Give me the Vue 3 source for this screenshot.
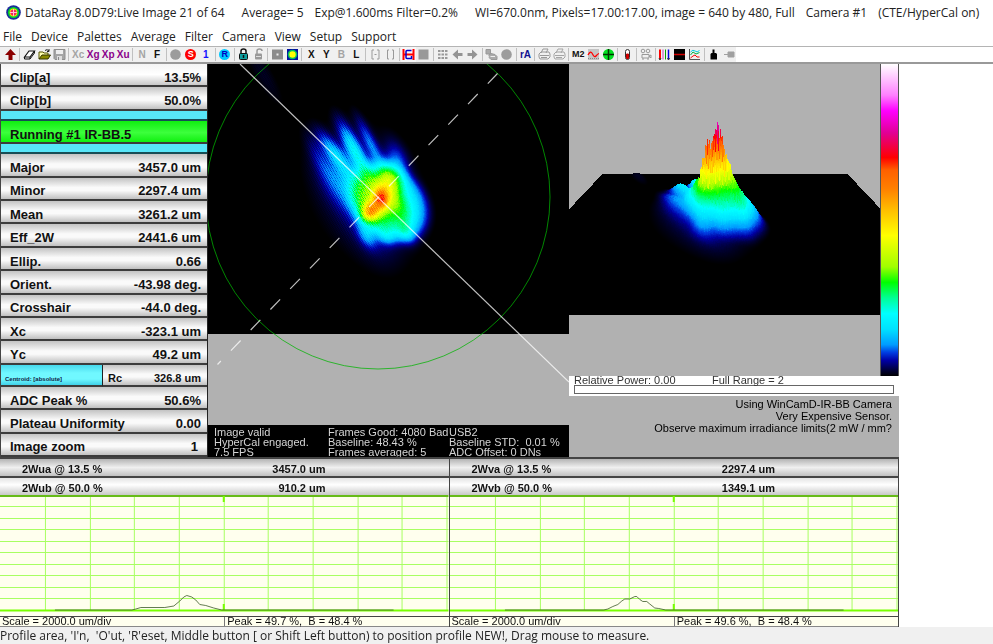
<script setup>
import { onMounted, ref } from 'vue'

const titleParts = [
  ['DataRay 8.0D79:Live Image 21 of 64', 'wide'],
  ['Average= 5', ''],
  ['Exp@1.600ms Filter=0.2%', 'wide'],
  ['WI=670.0nm, Pixels=17.00:17.00, image = 640 by 480, Full', ''],
  ['Camera #1', ''],
  ['(CTE/HyperCal on)', ''],
]

const menus = ['File', 'Device', 'Palettes', 'Average', 'Filter', 'Camera', 'View', 'Setup', 'Support']

const printer = (c) =>
  `<path d="M4 6L6 2H11L9 6" fill="none" stroke="${c}"/><path d="M2 7L4 5H12L13 7V10L11 12H3L2 10Z" fill="none" stroke="${c}"/><path d="M3 8.500H12M4 10.500H10" stroke="${c}"/>`

// Toolbar groups; each entry is [label, kind, content]
const tools = [
  [['Go', 'art', '<path d="M7.500 2L13 8H9.500V13H5.500V8H2Z" fill="#8b0000"/>']],
  [
    ['Clear', 'art', '<path d="M2.500 10L7 4H12.500L8 10Z" fill="#fff" stroke="#111" stroke-width="1.200"/><path d="M2.500 10V12H8V10M8 12L12.500 6V4" fill="none" stroke="#111"/>'],
    ['Open', 'art', '<path d="M2 12V5H6L7 6H11V8" fill="#ffffb0" stroke="#555500"/><path d="M2 12L5 8H13.500L11 12Z" fill="#8a8a00" stroke="#333300"/><path d="M8 3.500Q10 1.500 12 4M12 2V4.500H10" fill="none" stroke="#222"/>'],
    ['Save', 'art', '<path d="M2 2.500H13V12.500H3L2 11.500Z" fill="#a5a5a5" stroke="#8f8f8f"/><rect x="4" y="3" width="7" height="4" fill="#eee"/><rect x="5" y="9" width="5" height="4" fill="#ddd"/><rect x="6" y="10" width="1" height="3" fill="#888"/>'],
  ],
  [['Xc', 'text off', 'Xc'], ['Xg', 'text purple', 'Xg'], ['Xp', 'text purple', 'Xp'], ['Xu', 'text purple', 'Xu']],
  [['N', 'text off', 'N'], ['F', 'text', 'F']],
  [
    ['Idle', 'art', '<circle cx="7.500" cy="7.500" r="5.300" fill="#9c9c9c"/>'],
    ['Stop', 'text disc red', 'S'],
    ['Single', 'text blue', '1'],
  ],
  [['Run', 'text disc cyan', 'R']],
  [
    ['Lock', 'art', '<path d="M5 7V4Q5 2 7.500 2T10 4V7" fill="none" stroke="#111" stroke-width="1.500"/><rect x="3.500" y="6.500" width="8" height="6" rx="1" fill="#10a0a0" stroke="#111"/><path d="M7.500 8V11" stroke="#111" stroke-width="1.500"/>'],
    ['Unlock', 'art', '<path d="M6 7V4Q6 2 8.500 2T11 4" fill="none" stroke="#999" stroke-width="1.500"/><rect x="4" y="6.500" width="7" height="6" rx="1" fill="#999"/><path d="M5 9.500H10" stroke="#ddd"/>'],
  ],
  [
    ['Mask', 'art', '<rect x="2" y="2.500" width="11" height="10" fill="#8c8c8c"/><rect x="6.500" y="6.500" width="2" height="2" fill="#eee"/>'],
    ['Palette', 'art', '<rect x="2" y="2" width="11" height="11" fill="#0010a0"/><circle cx="7.500" cy="7.500" r="4.800" fill="#00c060"/><circle cx="7.500" cy="7.500" r="3.200" fill="#ffff00"/>'],
  ],
  [['X', 'text', 'X'], ['Y', 'text', 'Y'], ['B', 'text off', 'B'], ['L', 'text', 'L']],
  [
    ['Narrow', 'art', '<path d="M6 3H4V12H6M9 3H11V12H9M6.500 7.500H8.500" fill="none" stroke="#999"/>'],
    ['Widen', 'art', '<path d="M6 3H4.500V12H6M9 3H10.500V12H9" fill="none" stroke="#999"/>'],
  ],
  [
    ['HyperCal', 'art', '<rect width="15" height="15" fill="#f8f8f8"/><path d="M2.500 2V13M12.500 2V13M2 7.500H13" stroke="#f00" stroke-width="2"/><path d="M10.500 3.500H6Q5 3.500 5 4.500V10.500Q5 11.500 6 11.500H10.500V9" fill="none" stroke="#0000d0" stroke-width="1.500"/>'],
    ['Block', 'art', '<rect x="2.500" y="2.500" width="10" height="10" fill="#999"/>'],
  ],
  [
    ['Grid', 'art', '<path d="M3 4H13M3 7.500H13M3 11H13" stroke="#999" stroke-width="2.200" stroke-dasharray="2.500 1"/>'],
    ['Previous', 'art', '<path d="M2.500 7.500L8 2.500V6H12.500V9H8V12.500Z" fill="#949494"/>'],
    ['Next', 'art', '<path d="M12.500 7.500L7 2.500V6H2.500V9H7V12.500Z" fill="#949494"/>'],
  ],
  [
    ['Copy', 'art', '<path d="M2 2.500H6.500V7H2Z" fill="#aaa" stroke="#999"/><path d="M4.500 8L7 6.500L11 7.500L13 9.500V12.500H7L5 10.500" fill="#aaa" stroke="#999"/><path d="M6.500 9.500H11" stroke="#eee"/>'],
    ['Record', 'art', '<circle cx="7.500" cy="7.500" r="5.300" fill="#9c9c9c"/>'],
  ],
  [['rA', 'text navy', 'rA']],
  [['Print preview', 'art', printer('#999')], ['Print', 'art', printer('#a5a5a5')]],
  [
    ['M2', 'text tight', 'M2'],
    ['Trend', 'art', '<rect x="2" y="2" width="11" height="11" fill="#c4c4c4"/><path d="M2 8Q4.500 3 6.500 7T10 9T13 6.500" fill="none" stroke="#f00" stroke-width="1.300"/><path d="M2 11.500H13" stroke="#888" stroke-dasharray="1 1"/>'],
    ['Centre', 'art', '<circle cx="7.500" cy="7.500" r="5.500" fill="#00e020"/><path d="M7.500 2V13M2 7.500H13" stroke="#003000" stroke-width="1.500"/>'],
  ],
  [['Temperature', 'art', '<rect x="5.500" y="2.500" width="4" height="10" rx="2" fill="#fff" stroke="#333"/><path d="M6.500 7H8.500V11.500H6.500Z" fill="#e00000" stroke="#c00000"/>']],
  [['Camera', 'art', '<circle cx="5" cy="4" r="1.800" fill="none" stroke="#999"/><circle cx="10" cy="4" r="1.800" fill="none" stroke="#999"/><path d="M4 7.500H11V11H4ZM11 9L13 8V11ZM5 13V11M10 13V11" fill="none" stroke="#999"/>']],
  [
    ['Markers', 'art', '<path d="M3 2.500V12.500" stroke="#f00" stroke-width="2"/><path d="M6 2.500V12.500" stroke="#c040c0"/><path d="M8.500 2.500V12.500" stroke="#00a000"/><path d="M11.500 2.500V12.500" stroke="#0000e0" stroke-width="1.500"/><path d="M2 11L3 13L4 11M10.500 11L11.500 13L12.500 11" fill="none" stroke="#333"/>'],
    ['Profile', 'art', '<rect x="2" y="2" width="11" height="11"/><path d="M2 7.500H13" stroke="#d00000" stroke-width="1.500"/>'],
    ['Graph', 'art', '<path d="M2.500 2V12.500H13" fill="none" stroke="#555"/><path d="M3.500 5Q6 2 8 4T12.500 3.500" fill="none" stroke="#00cfe0"/><path d="M3.500 8L6 5L9 7L12.500 5.500" fill="none" stroke="#00b040"/><path d="M3.500 11L6 9L8 8L10 10H12.500" fill="none" stroke="#f00"/>'],
  ],
  [['Source', 'art', '<path d="M6.500 2.500H8.500V6H10L11 7V12.500H4.500V7L5.500 6H6.500Z"/>'], ['Connect', 'art', '<path d="M3 7.500H7M7 5H13V10H7Z" fill="#a0a0a0" stroke="#a0a0a0"/>']],
]

const clips = [['Clip[a]', '13.5%'], ['Clip[b]', '50.0%']]
const results = [
  ['Major', '3457.0 um'], ['Minor', '2297.4 um'], ['Mean', '3261.2 um'], ['Eff_2W', '2441.6 um'],
  ['Ellip.', '0.66'], ['Orient.', '-43.98 deg.'], ['Crosshair', '-44.0 deg.'], ['Xc', '-323.1 um'], ['Yc', '49.2 um'],
]
const settings = [['ADC Peak %', '50.6%'], ['Plateau Uniformity', '0.00'], ['Image zoom', '1']]

const frameInfo = [
  'Image valid', 'Frames Good: 4080 Bad', 'USB2',
  'HyperCal engaged.', 'Baseline: 48.43 %', 'Baseline STD:  0.01 %',
  '7.5 FPS', 'Frames averaged: 5', 'ADC Offset: 0 DNs',
]

const profiles = [
  {
    rows: [['2Wua @ 13.5 %', '3457.0 um'], ['2Wub @ 50.0 %', '910.2 um']],
    trace: 'M55 115H132L136 114L141 112.500H165L174 111L180 106L184 102L187 100.500L192 102L196 105L200 109.500L206 110.500L214 113L222 115H394',
    peak: 'Peak = 49.7 %,  B = 48.4 %',
  },
  {
    rows: [['2Wva @ 13.5 %', '2297.4 um'], ['2Wvb @ 50.0 %', '1349.1 um']],
    trace: 'M55 115H154L158 114L163 111.500L168 109.500L172 106L175 104H180L185 101.500L187 101.500L190 104.500L193 106.500H197L200 109L205 113L209 113.500L216 115H394',
    peak: 'Peak = 49.6 %,  B = 48.4 %',
  },
]
const columns = [45, 90, 134, 179, 224, 268, 313, 358, 402, 447]
const lines = [11, 23, 34, 46, 57, 69, 80, 92, 103]

// Palette from zero level up to full scale
const palette = [
  [0, 0, 0, 0], [0.02, 0, 0, 60], [0.05, 0, 0, 165], [0.075, 0, 60, 225], [0.1, 0, 155, 255],
  [0.15, 0, 225, 255], [0.2, 0, 255, 255], [0.25, 0, 255, 150], [0.3, 0, 255, 0], [0.35, 160, 255, 0],
  [0.45, 255, 255, 0], [0.53, 255, 192, 0], [0.6, 255, 128, 0], [0.66, 255, 96, 0], [0.7, 255, 0, 0],
  [0.78, 225, 0, 150], [0.85, 255, 0, 255], [0.9, 255, 128, 255], [1, 255, 255, 255],
]
const barGradient = 'linear-gradient(to top,' + palette.map(([t, r, g, b]) => `rgb(${r},${g},${b}) ${t * 100}%`).join(',') + ')'

function colour(t) {
  let i = 1
  while (i < palette.length - 1 && palette[i][0] < t) i++
  const a = palette[i - 1]
  const b = palette[i]
  const k = Math.max(0, Math.min(1, (t - a[0]) / (b[0] - a[0])))
  return [1, 2, 3].map((n) => a[n] + (b[n] - a[n]) * k)
}

// Lobes of the beam: x, y, long sigma, short sigma, angle in degrees, amplitude, exponent
const lobes = [
  [180, 138, 43, 33, 44, 0.16, 3],
  [170, 135, 21, 14, 62, 0.14, 1],
  [173, 134, 7, 5, 80, 0.28, 1],
  [162, 147, 7, 6, 120, 0.28, 1],
  [181, 116, 14, 9, 100, 0.17, 1],
  [191, 142, 14, 7, 60, 0.07, 1],
  [127, 90, 18, 5, 54, 0.12, 1],
  [146, 86, 20, 5, 63, 0.16, 1],
  [162, 79, 19, 4, 64, 0.08, 1],
  [112, 96, 20, 5, 62, 0.035, 1],
  [189, 92, 14, 6, 68, 0.04, 1],
  [138, 122, 24, 12, 50, 0.08, 1],
  [158, 171, 9, 5, 60, 0.08, 1],
  [198, 168, 8, 5, 60, 0.07, 1],
  [178, 173, 6, 5, 60, 0.04, 1],
  [158, 128, 46, 34, 60, 0.05, 1],
  [165, 175, 26, 14, 60, 0.02, 1],
  [55, 10, 30, 8, 60, 0.022, 1],
].map(([x, y, l, s, a, v, p]) => [x, y, l, s, Math.cos((a * Math.PI) / 180), Math.sin((a * Math.PI) / 180), v, p])

function beam(x, y) {
  let t = -0.012
  for (const [cx, cy, l, s, c, n, v, p] of lobes) {
    const dx = x - cx
    const dy = y - cy
    const u = (dx * c + dy * n) / l
    const w = (dy * c - dx * n) / s
    t += v * Math.exp(-Math.pow((u * u + w * w) / (p > 1 ? 1 : 2), p))
  }
  return Math.max(0, t)
}

function noise(x, y) {
  const n = Math.sin(x * 12.9898 + y * 78.233) * 43758.5453
  return n - Math.floor(n)
}

const beamCanvas = ref(null)
const surfaceCanvas = ref(null)

function put(img, x, y, t) {
  const i = (y * img.width + x) * 4
  const [r, g, b] = colour(t)
  img.data[i] = r
  img.data[i + 1] = g
  img.data[i + 2] = b
  img.data[i + 3] = 255
}

function drawBeam(el) {
  const ctx = el.getContext('2d')
  const img = ctx.createImageData(el.width, el.height)
  for (let y = 0; y < el.height; y++) {
    for (let x = 0; x < el.width; x++) {
      const side = Math.max(0, Math.min(1, (185 - x) / 50))
      const weave = Math.sin(x * 2.5 + y * 0.9) * Math.cos(y * 2.2)
      put(img, x, y, beam(x, y) * (1 + 0.3 * side * weave + 0.08 * (noise(x, y) - 0.5)))
    }
  }
  ctx.putImageData(img, 0, 0)
}

function drawSurface(el) {
  const ctx = el.getContext('2d')
  const img = ctx.createImageData(el.width, el.height)
  const steps = 600
  for (let s = 0; s <= steps; s++) {
    const v = s / steps
    const w = 1 / ((1 - v) / 245 + v / 512)
    const base = 110 + ((w - 245) / 267) * 140
    for (let x = 0; x < el.width; x++) {
      const u = 0.5 + (x - 155.5) / w
      if (u < 0 || u > 1) continue
      let t = beam(u * 361, v * 270)
      t *= 1 + (noise(x, Math.floor(s / 4)) - 0.5) * (t > 0.35 ? 0.34 : 0.14)
      const top = Math.max(0, Math.round(base - t * 120 * (w / 331)))
      for (let y = top; y <= base; y++) put(img, x, y, t)
    }
  }
  ctx.putImageData(img, 0, 0)
}

onMounted(() => {
  drawBeam(beamCanvas.value)
  drawSurface(surfaceCanvas.value)
})
</script>

<template>
  <div class="app">
    <header class="title">
      <svg class="logo" viewBox="0 0 15 15" aria-hidden="true">
        <circle cx="7.500" cy="7.500" r="7.300" fill="#1a2a9a" />
        <circle cx="7.500" cy="7.500" r="5.600" fill="#00d030" />
        <circle cx="7.500" cy="7.500" r="3.900" fill="#ffe000" />
        <circle cx="7.500" cy="7.500" r="3.100" fill="#f02060" />
        <path d="M7.500 4V11M4 7.500H11" stroke="#ffc0d0" stroke-width="1" />
      </svg>
      <span v-for="[text, gap] in titleParts" :key="text" :class="gap">{{ text }}</span>
    </header>

    <nav class="menu">
      <button v-for="m in menus" :key="m" type="button">{{ m }}</button>
    </nav>

    <div class="toolstrip">
      <div class="toolbar" role="toolbar">
        <template v-for="(group, g) in tools" :key="g">
          <span v-if="g" class="sep"></span>
          <button v-for="[label, kind, body] in group" :key="label" type="button" class="tool" :class="kind" :aria-label="label">
            <svg v-if="kind === 'art'" viewBox="0 0 15 15" v-html="body"></svg>
            <span v-else>{{ body }}</span>
          </button>
        </template>
      </div>
    </div>

    <main class="workspace">
      <div class="upper">
        <aside class="side">
          <button v-for="([k, v], i) in clips" :key="k" type="button" class="row" :class="{ light: i === 0 }">
            <span>{{ k }}</span><span>{{ v }}</span>
          </button>
          <div class="strip"></div>
          <button type="button" class="row running"><span>Running #1 IR-BB.5</span></button>
          <div class="strip"></div>
          <button v-for="[k, v] in results" :key="k" type="button" class="row">
            <span>{{ k }}</span><span>{{ v }}</span>
          </button>
          <div class="pair">
            <button type="button" class="row centroid"><span>Centroid: [absolute]</span></button>
            <button type="button" class="row small"><span>Rc</span><span>326.8 um</span></button>
          </div>
          <button v-for="[k, v] in settings" :key="k" type="button" class="row" :class="{ zoomrow: k === 'Image zoom' }">
            <span>{{ k }}</span><span>{{ v }}</span>
          </button>
        </aside>

        <section class="view">
          <canvas ref="beamCanvas" width="361" height="270"></canvas>
          <svg class="overlay" viewBox="0 0 361 361" fill="none">
            <circle cx="170" cy="133" r="172" stroke="#00b400" stroke-opacity="0.75" />
            <path d="M32 0L361 318" stroke="#fff" stroke-opacity="0.75" stroke-width="1.200" />
            <path d="M289.500 9.500L9.500 300.500" stroke="#fff" stroke-opacity="0.75" stroke-width="1.200" stroke-dasharray="14 14.500" />
          </svg>
          <div class="frames">
            <span v-for="t in frameInfo" :key="t">{{ t }}</span>
          </div>
        </section>

        <section class="right">
          <div class="plot">
            <div class="surface"><canvas ref="surfaceCanvas" width="311" height="251"></canvas></div>
            <div class="scale" :style="{ background: barGradient }"></div>
          </div>
          <div class="power">
            <div class="labels"><label for="power">Relative Power: 0.00</label><span>Full Range = 2</span></div>
            <progress id="power" value="0" max="2"></progress>
          </div>
          <div class="note">
            <p>Using WinCamD-IR-BB Camera</p>
            <p>Very Expensive Sensor.</p>
            <p>Observe maximum irradiance limits(2 mW / mm?</p>
          </div>
        </section>
      </div>

      <div class="lower">
        <section v-for="p in profiles" :key="p.peak" class="profile">
          <button v-for="([k, v], i) in p.rows" :key="k" type="button" class="width" :class="{ light: i === 1 }">
            <span>{{ k }}</span><span>{{ v }}</span>
          </button>
          <svg class="chart" viewBox="0 0 449 121" preserveAspectRatio="none" fill="none">
            <path v-for="x in columns" :key="'c' + x" :d="`M${x}.500 0V115`" stroke="#a8ff60" />
            <path v-for="y in lines" :key="'l' + y" :d="`M0 ${y}.500H449`" stroke="#a8ff60" />
            <path d="M0 1H449" stroke="#66bb18" stroke-width="2" />
            <path d="M0 115.500H449" stroke="#78ff00" stroke-width="2" />
            <path d="M224 1V7M224 109V115" stroke="#78ff00" stroke-width="2" />
            <path :d="p.trace" stroke="#3c5a28" stroke-opacity="0.8" />
          </svg>
          <footer class="legend"><span>Scale = 2000.0 um/div</span><span>{{ p.peak }}</span></footer>
        </section>
      </div>
    </main>

    <footer class="status">Profile area, 'I'n,&nbsp; 'O'ut, 'R'eset, Middle button [ or Shift Left button) to position profile NEW!, Drag mouse to measure.</footer>
  </div>
</template>

<style>
body {
  background: #fff;
}
</style>

<style scoped>
.app {
  display: flex;
  flex-direction: column;
  min-height: 100vh;
  overflow: hidden;
  font-family: "Open Sans", "Noto Sans", sans-serif;
  font-size: 12px;
  color: #222;
}
button {
  margin: 0;
  padding: 0;
  border: 0;
  background: none;
  font: inherit;
  color: inherit;
}
.title {
  display: flex;
  align-items: center;
  gap: 11px;
  height: 25px;
  padding-left: 6px;
  white-space: nowrap;
}
.title .wide {
  margin-right: 6px;
}
.logo {
  flex: none;
  width: 15px;
  height: 15px;
  margin-right: -7px;
}
.menu {
  display: flex;
  align-items: center;
  gap: 9px;
  height: 19px;
  padding: 2px 0 0 3px;
}
.toolstrip {
  border-top: 1px solid #b4b4b4;
  border-bottom: 2px solid #999;
}
.toolbar {
  display: flex;
  align-items: center;
  max-width: 736px;
  height: 15px;
  padding-left: 3px;
  box-sizing: border-box;
  background: #f0f0f0;
}
.tool {
  flex: none;
  width: 15px;
  height: 15px;
  display: flex;
  align-items: center;
  justify-content: center;
  font: bold 10px/13px "Liberation Sans", Arial, sans-serif;
  color: #111;
}
.tool svg {
  display: block;
  width: 15px;
  height: 15px;
}
.tool.off {
  color: #a4a4a4;
}
.tool.purple {
  color: #8b008b;
}
.tool.blue {
  color: #1010ff;
}
.tool.navy {
  color: #101090;
}
.tool.tight {
  font-size: 9px;
}
.disc span {
  width: 11px;
  height: 11px;
  border-radius: 50%;
  font-size: 9px;
  line-height: 11px;
  text-align: center;
}
.red span {
  background: #f00;
  color: #fff;
}
.cyan span {
  background: #00c8ff;
  color: #0000c0;
}
.sep {
  flex: 1;
  height: 13px;
  background: linear-gradient(#c0c0c0, #c0c0c0) center / 1px 100% no-repeat;
}
.workspace {
  margin-right: 94px;
  flex: 1;
  display: flex;
  flex-direction: column;
}
.upper {
  display: grid;
  grid-template-columns: 208px minmax(0, 361fr) minmax(0, 330fr);
  min-height: 393px;
  background: #b1b1b1;
}
.side {
  display: flex;
  flex-direction: column;
  border-right: 1px solid #222;
  border-left: 1px solid #444;
  font: bold 13px/14px "Liberation Sans", Arial, sans-serif;
  color: #111;
}
.row {
  flex: 1;
  display: flex;
  justify-content: space-between;
  align-items: center;
  padding: 6px 6px 0 9px;
  border-bottom: 2px solid #3c3c3c;
  background: linear-gradient(#c3c3c3, #fafafa 45%, #fafafa 60%, #c0c0c0);
}
.row.light {
  background: linear-gradient(#f4f4f4, #fff 50%, #c8c8c8);
}
.row.running {
  background: linear-gradient(#10ee10, #3cff3c 55%, #10f010);
}
.zoomrow {
  padding-right: 9px;
}
.strip {
  flex: none;
  height: 8px;
  border-bottom: 2px solid #174d55;
  background: #58e6f8;
}
.pair {
  flex: 1;
  display: flex;
}
.row.centroid {
  flex: 1;
  align-items: flex-end;
  padding: 0 4px;
  border-right: 1px solid #222;
  background: linear-gradient(#48d8ec, #70f8ff 40%, #70f8ff 70%, #40d0e8);
  font-size: 6px;
  line-height: 11px;
  color: #124;
}
.small {
  flex: 1;
  padding-left: 5px;
  font-size: 11px;
}
.view {
  position: relative;
  display: flex;
  flex-direction: column;
  overflow: hidden;
  background: #b1b1b1;
}
.view canvas,
.surface canvas {
  display: block;
  width: 100%;
  height: auto;
}
.overlay {
  position: absolute;
  top: 0;
  left: 0;
  width: 100%;
}
.frames {
  margin-top: auto;
  display: grid;
  grid-template-columns: 114fr 121fr 120fr;
  padding: 2px 0 0 6px;
  background: #000;
  color: #d4d4d4;
  font: 11px/10px "Liberation Sans", Arial, sans-serif;
  white-space: pre;
}
.right {
  display: flex;
  flex-direction: column;
  min-width: 0;
  font: 11px/12px "Liberation Sans", Arial, sans-serif;
}
.plot {
  display: flex;
  height: 312px;
}
.surface {
  flex: 1;
  min-width: 0;
  overflow: hidden;
}
.scale {
  width: 17px;
  border: solid #555;
  border-width: 0 1px;
}
.power {
  padding: 0 5px 2px;
  background: #fff;
  color: #333;
}
.labels {
  display: grid;
  grid-template-columns: 138fr 182fr;
  line-height: 9px;
}
progress {
  display: block;
  appearance: none;
  box-sizing: border-box;
  width: 100%;
  height: 9px;
  border: 1px solid #666;
  background: #fff;
}
progress::-webkit-progress-bar {
  background: #fff;
}
progress::-webkit-progress-value {
  background: #00c000;
}
.note {
  padding: 2px 7px 0;
  color: #000;
  text-align: right;
}
.note p {
  margin: 0;
}
.lower {
  display: grid;
  grid-template-columns: 1fr 1fr;
}
.profile {
  display: flex;
  flex-direction: column;
  min-width: 0;
  border-right: 1px solid #444;
}
.width {
  display: flex;
  justify-content: space-between;
  box-sizing: border-box;
  height: 19px;
  padding: 2px 123px 0 22px;
  border-top: 2px solid #444;
  background: linear-gradient(#b4b4b4, #f0f0f0 50%, #c0c0c0);
  font: bold 11px/16px "Liberation Sans", Arial, sans-serif;
  color: #111;
}
.width.light {
  background: linear-gradient(#e4e4e4, #fff 40%, #c8c8c8);
}
.chart {
  display: block;
  width: 100%;
  height: 121px;
  background: #ffffee;
}
.legend {
  display: grid;
  grid-template-columns: 1fr 1fr;
  height: 9px;
  border-top: 1px solid #444;
  border-bottom: 1px solid #888;
  background: #ffffee;
  font: 11px/9px "Liberation Sans", Arial, sans-serif;
  color: #111;
  white-space: pre;
}
.legend span {
  padding-left: 2px;
}
.legend span + span {
  border-left: 1px solid #777;
}
.status {
  height: 17px;
  line-height: 17px;
  background: #f0f0f0;
  white-space: nowrap;
}
</style>
